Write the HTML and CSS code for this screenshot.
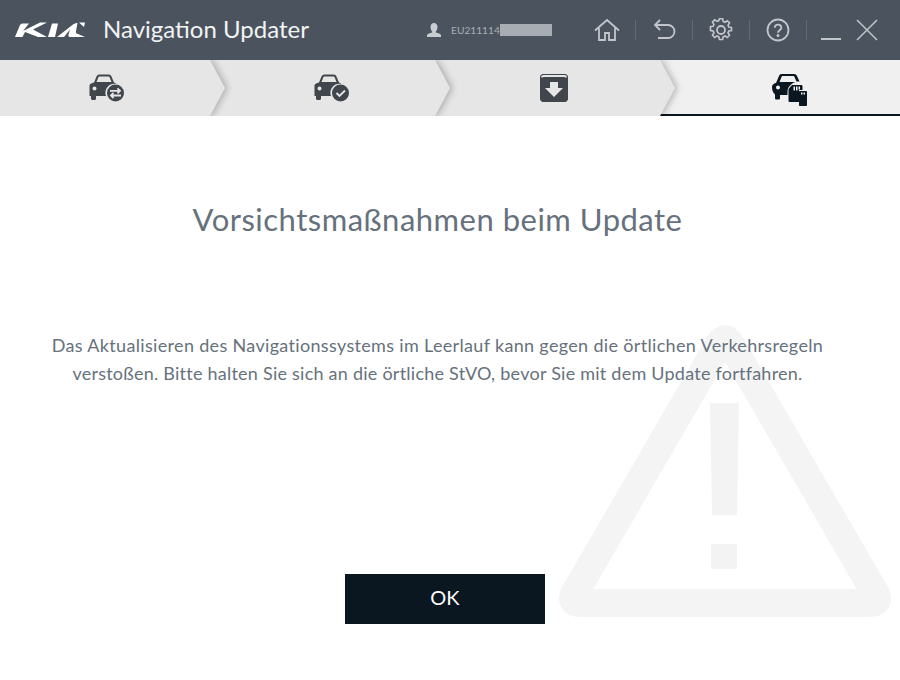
FILE: index.html
```html
<!DOCTYPE html>
<html lang="de">
<head>
    <meta charset="UTF-8">
    <meta name="viewport" content="width=device-width, initial-scale=1.0">
    <title>Navigation Updater</title>
    <link rel="stylesheet" href="styles.css">
</head>
<body>

    <div class="app">
        <div class="header">
            <svg class="logo" width="70" height="18" viewBox="0 0 70 18">
                <path d="M0 16 5 4Q5.500 2.500 7.500 2.500H14L8 10 25 1.500H32L18 8.500 32 16H23L10 11 7.500 16Z"/>
                <path d="M33 16 37 2.500H43L40 16Z"/>
                <path d="M42 16 58 3.500Q60.500 1.500 62.500 2L61 10Q60.500 12.500 63 13L70 16H55Q53 16 53.500 13.500L55 8.500 49 16Z"/>
                <path d="M64 1.500H70L69 6Z"/>
            </svg>
            <div class="app-title">Navigation Updater</div>

            <div class="user">
                <svg width="14" height="14" viewBox="0 0 14 14"><path d="M7 0c2.300 0 3.500 1.700 3.500 4S9.300 8 8.800 8.600v1c2.500.6 4.700 1.400 5.200 2.400v2H0v-2c.5-1 2.700-1.800 5.200-2.400v-1C4.700 8 3.500 6.300 3.500 4S4.700 0 7 0z"/></svg>
                <span class="user-id">EU211114</span>
                <span class="redacted"></span>
            </div>

            <div class="toolbar">
                <svg class="tool" width="28" height="24" viewBox="0 0 28 24"><path d="M2 12.500 14 2l12 10.500M6 10v12h6v-7h4v7h6V10"/></svg>
                <i class="sep"></i>
                <svg class="tool" width="28" height="24" viewBox="0 0 28 24"><path d="M10 2 5 7l5 5M5 7h13a6.500 6.500 0 0 1 0 13H8"/></svg>
                <i class="sep"></i>
                <svg class="tool" width="28" height="24" viewBox="0 0 28 24"><circle cx="14" cy="12" r="4"/><path d="M12.200 1.500h3.600l.6 3 2 .9 2.600-1.700 2.500 2.500-1.700 2.600.9 2 3 .6v3.200l-3 .6-.9 2 1.700 2.600-2.500 2.500-2.600-1.700-2 .9-.6 3h-3.600l-.6-3-2-.9-2.600 1.700-2.500-2.500 1.700-2.600-.9-2-3-.6V10.400l3-.6.9-2-1.700-2.600 2.500-2.500 2.600 1.700 2-.9z" transform="translate(1.400 -.6) scale(.9)"/></svg>
                <i class="sep"></i>
                <svg class="tool" width="28" height="24" viewBox="0 0 28 24"><circle cx="14" cy="12" r="10.500"/><path d="M10.800 9.800c0-4.300 6.500-4.300 6.500 0 0 2.500-3.300 2.500-3.300 5"/><circle class="dot" cx="14" cy="17.500" r=".6"/></svg>
                <i class="sep"></i>
                <span class="minimize"></span>
                <svg class="tool close" width="22" height="22" viewBox="0 0 22 22"><path d="M1 1l20 20M21 1 1 21"/></svg>
            </div>
        </div>

        <div class="steps">
            <div class="step step-1">
                <svg class="step-icon" width="36" height="28" viewBox="0 0 36 28">
                    <path d="M5 8.500 7.500 2.500C8 1.200 9 .5 10.500.5h9c1.500 0 2.500.7 3 2L25 8.500c1 .3 1.500.8 2 1.500a9 9 0 0 0-10 12H7v2.500c0 .8-.5 1.500-1.500 1.500h-2C2.500 26 2 25.300 2 24.500V22H.5V11.500C.5 10 2.500 9 5 8.500zM7.500 8h15l-1.800-4.500c-.3-.7-.7-1-1.500-1h-8.400c-.8 0-1.200.3-1.500 1zM5.500 12.500a2 2 0 1 0 0 4 2 2 0 0 0 0-4z"/>
                    <circle cx="26.500" cy="19" r="8.500"/>
                    <path class="cut" d="M21 16.800h9.500M28.500 14.300l2.500 2.500-2.500 2.500M32 21.500h-9.500M24.500 19l-2.500 2.500 2.500 2.500"/>
                </svg>
            </div>
            <div class="step step-2">
                <svg class="step-icon" width="36" height="28" viewBox="0 0 36 28">
                    <path d="M5 8.500 7.500 2.500C8 1.200 9 .5 10.500.5h9c1.500 0 2.500.7 3 2L25 8.500c1 .3 1.500.8 2 1.500a9 9 0 0 0-10 12H7v2.500c0 .8-.5 1.500-1.500 1.500h-2C2.500 26 2 25.300 2 24.500V22H.5V11.500C.5 10 2.500 9 5 8.500zM7.500 8h15l-1.800-4.500c-.3-.7-.7-1-1.500-1h-8.400c-.8 0-1.200.3-1.500 1zM5.500 12.500a2 2 0 1 0 0 4 2 2 0 0 0 0-4z"/>
                    <circle cx="26.500" cy="19" r="8.500"/>
                    <path class="cut" d="M22.500 19l3 3 5.500-5.500"/>
                </svg>
            </div>
            <div class="step step-3">
                <svg class="step-icon" width="28" height="28" viewBox="0 0 28 28">
                    <path d="M3 0h22c1.500 0 3 1.500 3 3v22c0 1.500-1.500 3-3 3H3c-1.500 0-3-1.500-3-3V3C0 1.500 1.500 0 3 0z"/>
                    <path class="cut" d="M2 3.500C2 2.500 2.500 2 3.500 2h21c1 0 1.500.5 1.500 1.500"/>
                    <path class="fill-light" d="M10 8h8v6h5l-9 9-9-9h5z"/>
                </svg>
            </div>
            <div class="step step-4 active">
                <svg class="step-icon" width="36" height="34" viewBox="0 0 36 34">
                    <path d="M4 10 7 3C7.500 1.500 8.500 1 10 1h12c1.500 0 2.500.7 3 2l2.500 5.500h-3L22.500 4c-.3-.7-.7-1-1.500-1H11c-.8 0-1.200.3-1.500 1L7.500 9h16c-2.800 1-5 2.500-7 5.500-.8 1.300-1 3-1 5.500V22H8v3c0 1-.5 1.500-1.500 1.500h-2C3.500 26.500 3 26 3 25v-3.500C1 20 0 17 0 14c0-2 1.500-3.500 4-4zM6 12.500a2 2 0 1 0 0 4 2 2 0 0 0 0-4z"/>
                    <path d="M20 12h9c1 0 1.500.5 1.500 1.500V17H27v12H18c-1 0-1.500-.5-1.500-1.500V16z"/>
                    <path class="sd" d="M21.500 13.500H23v4h-1.500zM24 13.500h1.500v4H24zM26.500 13.500H28v3h-1.500z"/>
                    <path d="M28 18h6c.6 0 1 .4 1 1v13c0 .6-.4 1-1 1h-6c-.6 0-1-.4-1-1V19c0-.6.4-1 1-1z"/>
                    <path class="sd" d="M29 19.500h1.500v2H29zM31.500 19.500H33v2h-1.500z"/>
                </svg>
            </div>
        </div>

        <div class="content">
            <svg class="watermark" width="340" height="300" viewBox="0 0 340 300">
                <path class="wm-outline" d="M176 23.400 320 271.600Q326 282 314 282H26Q14 282 20 271.600L164 23.400Q170 13 176 23.400Z"/>
                <path class="wm-mark" d="M155 82h29l-2 112h-25zM156 223h26v25h-26z"/>
            </svg>

            <h1 class="title">Vorsichtsmaßnahmen beim Update</h1>
            <p class="message">Das Aktualisieren des Navigationssystems im Leerlauf kann gegen die örtlichen Verkehrsregeln<br><span class="line-2">verstoßen. Bitte halten Sie sich an die örtliche StVO, bevor Sie mit dem Update fortfahren.</span></p>
            <button class="ok-btn">OK</button>
        </div>
    </div>

</body>
</html>
```

FILE: styles.css
```css
:root {
    --header-bg: #4b535e;
    --header-text: #f2f3f4;
    --tool-color: #c2c6cb;
    --step-bg: #e6e6e6;
    --step-active: #f0f0f1;
    --icon-color: #41464d;
    --dark: #0a1620;
    --text-main: #66717d;
}

* {
    box-sizing: border-box;
}

html, body {
    margin: 0;
    height: 100%;
}

body {
    font-family: Lato, 'Noto Sans', sans-serif;
    background-color: #fff;
}

.app {
    width: 900px;
    height: 680px;
    display: flex;
    flex-direction: column;
    overflow: hidden;
}

.header {
    height: 60px;
    flex: none;
    background-color: var(--header-bg);
    display: flex;
    align-items: center;
    padding-left: 15px;
    position: relative;
    z-index: 5;
}

.logo {
    fill: #fff;
    margin-right: 18px;
}

.app-title {
    width: 324px;
    padding-bottom: 3px;
    font-size: 24px;
    color: var(--header-text);
}

.user {
    width: 166px;
    display: flex;
    align-items: center;
    color: #a9aeb5;
    font-size: 10.2px;
}

.user svg {
    fill: #c9ccd0;
    margin-right: 10px;
}

.redacted {
    width: 52px;
    height: 12px;
    background-color: #a8adb4;
}

.toolbar {
    display: flex;
    align-items: center;
}

.tool {
    fill: none;
    stroke: var(--tool-color);
    stroke-width: 1.8;
}

.tool .dot {
    fill: var(--tool-color);
}

.sep {
    width: 1px;
    height: 20px;
    margin: 0 14px;
    background-color: #636a74;
}

.minimize {
    width: 20px;
    height: 2px;
    margin-top: 18px;
    background-color: var(--tool-color);
}

.close {
    margin-left: 15px;
    stroke-width: 1.5;
}

.steps {
    height: 56px;
    flex: none;
    display: grid;
    grid-template-columns: 210px 225px 225px 1fr;
    overflow: hidden;
}

.step {
    position: relative;
    display: flex;
    align-items: center;
    justify-content: center;
    padding-left: 15px;
    background-color: var(--step-bg);
    filter: drop-shadow(3px 0 3px rgba(0, 0, 0, 0.22));
}

/* chevron tip of each step */
.step::after {
    content: "";
    position: absolute;
    top: 0;
    right: -15px;
    width: 15px;
    height: 100%;
    background-color: var(--step-bg);
    clip-path: polygon(0 0, 100% 50%, 0 100%);
}

.step-1 { z-index: 4; padding-left: 3px; }
.step-2 { z-index: 3; padding-left: 18px; }
.step-3 { z-index: 2; padding-left: 13px; }

.step.active {
    z-index: 1;
    background-color: var(--step-active);
    border-bottom: 2px solid var(--dark);
    filter: none;
    padding: 6px 0 0 20px;
}

.step.active::after {
    display: none;
}

.step-icon {
    fill: var(--icon-color);
}

.step-icon .cut {
    fill: none;
    stroke: var(--step-bg);
    stroke-width: 1.8;
}

.step-icon .fill-light {
    fill: var(--step-bg);
}

.active .step-icon {
    fill: var(--dark);
}

.active .step-icon .sd {
    fill: var(--step-active);
}

.content {
    flex: 1;
    position: relative;
    display: flex;
    flex-direction: column;
    align-items: center;
    padding-right: 25px;
    color: var(--text-main);
}

/* big warning sign behind the text */
.watermark {
    position: absolute;
    left: 555px;
    top: 205px;
}

.wm-outline {
    fill: none;
    stroke: #f4f4f4;
    stroke-width: 28;
    stroke-linejoin: round;
}

.wm-mark {
    fill: #f3f3f3;
}

.title {
    position: relative;
    margin: 85px 0 0;
    font-size: 31px;
    font-weight: 400;
    line-height: 36px;
    letter-spacing: 0.5px;
}

.message {
    position: relative;
    margin: 94px 0 0;
    font-size: 18px;
    line-height: 28px;
    letter-spacing: 0.33px;
    text-align: center;
}

.line-2 {
    letter-spacing: 0.24px;
}

.ok-btn {
    position: relative;
    width: 200px;
    height: 50px;
    margin-top: 187px;
    margin-left: 15px;
    padding-bottom: 5px;
    border: none;
    background-color: var(--dark);
    color: #fff;
    font-family: inherit;
    font-size: 20px;
    font-weight: 400;
}
```
